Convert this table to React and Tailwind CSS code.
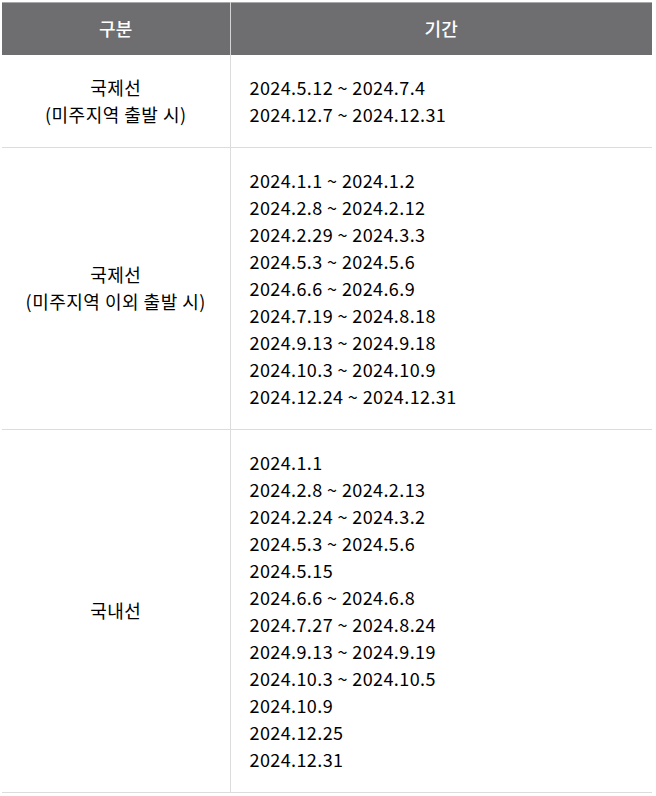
import React from 'react';

const rows = [
    {
        label: ['국제선', '(미주지역 출발 시)'],
        periods: ['2024.5.12 ~ 2024.7.4', '2024.12.7 ~ 2024.12.31'],
    },
    {
        label: ['국제선', '(미주지역 이외 출발 시)'],
        periods: [
            '2024.1.1 ~ 2024.1.2',
            '2024.2.8 ~ 2024.2.12',
            '2024.2.29 ~ 2024.3.3',
            '2024.5.3 ~ 2024.5.6',
            '2024.6.6 ~ 2024.6.9',
            '2024.7.19 ~ 2024.8.18',
            '2024.9.13 ~ 2024.9.18',
            '2024.10.3 ~ 2024.10.9',
            '2024.12.24 ~ 2024.12.31',
        ],
    },
    {
        label: ['국내선'],
        periods: [
            '2024.1.1',
            '2024.2.8 ~ 2024.2.13',
            '2024.2.24 ~ 2024.3.2',
            '2024.5.3 ~ 2024.5.6',
            '2024.5.15',
            '2024.6.6 ~ 2024.6.8',
            '2024.7.27 ~ 2024.8.24',
            '2024.9.13 ~ 2024.9.19',
            '2024.10.3 ~ 2024.10.5',
            '2024.10.9',
            '2024.12.25',
            '2024.12.31',
        ],
    },
];

export default function App() {
    return (
        <div className="bg-white w-[656px] min-h-[796px] pt-[2px] px-[2px] font-['Noto_Sans_CJK_KR','Noto_Sans',sans-serif] text-black">
            <table className="w-[650px] border-collapse table-fixed">
                <colgroup>
                    <col className="w-[228px]" />
                    <col />
                </colgroup>
                <thead>
                    <tr className="bg-[#6e6e70] text-white border-t border-[#a9a9ab]">
                        <th className="h-[52px] text-[18px] tracking-[0.3px] font-medium text-center border-r border-[#d4d4d4]">구분</th>
                        <th className="h-[52px] text-[18px] tracking-[0.3px] font-medium text-center">기간</th>
                    </tr>
                </thead>
                <tbody>
                    {rows.map((row, i) => (
                        <tr key={i} className="border-b border-[#dcdcdc]">
                            <td className="text-center align-middle text-[18px] tracking-[0.5px] leading-[27px] border-r border-[#dcdcdc]">
                                {row.label.map((l) => (
                                    <div key={l}>{l}</div>
                                ))}
                            </td>
                            <td className="pl-[19px] py-[19px] text-[18px] tracking-[0.4px] leading-[27px] align-middle">
                                {row.periods.map((p) => (
                                    <div key={p}>{p}</div>
                                ))}
                            </td>
                        </tr>
                    ))}
                </tbody>
            </table>
        </div>
    );
}
